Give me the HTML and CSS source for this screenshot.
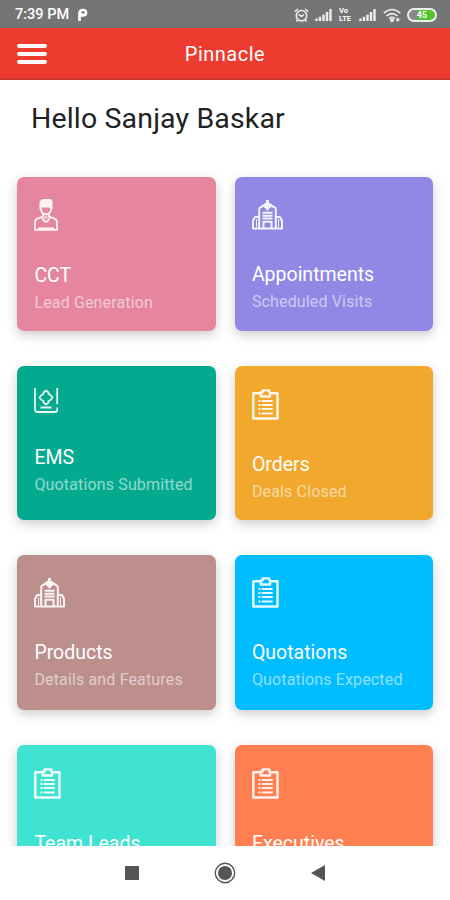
FILE: index.html
```html
<!DOCTYPE html>
<html lang="en">
<head>
    <meta charset="UTF-8">
    <meta name="viewport" content="width=device-width, initial-scale=1.0">
    <title>Pinnacle</title>
    <link rel="stylesheet" href="styles.css">
</head>
<body>
    <!-- Shared icons -->
    <svg class="sprite">
        <symbol id="clipboard" viewBox="0 0 27 31">
            <path d="M8 4.200H1.300v25.300h24.200V4.200H18" fill="none" stroke="currentColor" stroke-width="2.400" stroke-linejoin="round"/>
            <path d="M8.700 7.500V3.500h2V1.300h6.600v2.200h.8v4z" fill="none" stroke="currentColor" stroke-width="2.300" stroke-linejoin="round"/>
            <path d="M6.500 12h2m1.200 0h11M6.500 16h2m1.200 0h11M6.500 20h2m1.200 0h11M6.500 24.500h2m1.200 0h11" fill="none" stroke="currentColor" stroke-width="2.200"/>
        </symbol>
        <symbol id="building" viewBox="0 0 31 30">
            <g fill="none" stroke="currentColor" stroke-width="2" stroke-linejoin="round">
                <path d="M7.200 28V9.500q0-1.500 1.500-2.300L14 4.500m3 0l5.300 2.700q1.500.8 1.500 2.300V28"/>
                <path d="M6.800 17H4q-1.500 0-1.900 1.500L1 21v7.500h29V21l-1.100-2.500Q28.500 17 27 17h-2.800"/>
                <path d="M4.500 19v8M26.500 19v8" stroke-width="1"/>
                <path d="M11.500 28v-6.300h8V28M10.500 12.800h10M10.500 15.700h10M10.500 18.500h10"/>
            </g>
            <path d="M14 0h3v2.500l4.500 3L18 8l-2.500 3L13 8 9.500 5.500l4.500-3z" fill="currentColor"/>
        </symbol>
    </svg>

    <div class="status-bar">
        <div class="status-left">
            <span>7:39 PM</span>
            <svg width="11" height="14" viewBox="0 0 11 14">
                <path d="M2.500 13V5.500Q2.500 2 6 2q3 0 3 2.700T6 7.500H4.800V5" fill="none" stroke="#fff" stroke-width="2.700"/>
            </svg>
        </div>
        <div class="status-right">
            <svg class="alarm" width="15" height="14" viewBox="0 0 15 14">
                <circle cx="7.500" cy="7.700" r="5.200"/>
                <path d="M.8 3.600L4 1M14.200 3.600L11 1M4.700 6.500l2.800 2 2.500-2M3.500 12l-1 1.500M11.500 12l1 1.500"/>
            </svg>
            <svg class="signal" width="18" height="12" viewBox="0 0 18 12">
                <path d="M1.500 12V9.500M5 12V7.800M8.500 12V5.500M12 12V3M15.500 12V0"/>
            </svg>
            <div class="volte"><span>Vo</span><span>LTE</span></div>
            <svg class="signal" width="18" height="12" viewBox="0 0 18 12">
                <path d="M1.500 12V9.500M5 12V7.800M8.500 12V5.500M12 12V3M15.500 12V0"/>
            </svg>
            <svg class="wifi" width="18" height="14" viewBox="0 0 18 14">
                <path d="M.8 5.200q8.200-7.400 16.400 0M3.500 8q5.500-4.900 11 0M6.200 10.500q2.800-2.200 5.600 0"/>
                <path d="M8 11.500h2v1.500H8zM14 11h1.500v1.500H14z"/>
            </svg>
            <div class="battery"><span>45</span></div>
        </div>
    </div>

    <header class="header">
        <div class="menu">
            <span></span>
            <span></span>
            <span></span>
        </div>
        <h1>Pinnacle</h1>
    </header>

    <main class="content">
        <h2>Hello Sanjay Baskar</h2>
        <div class="cards">
            <div class="card pink">
                <svg width="24" height="32" viewBox="0 0 24 32">
                    <path d="M5.500 10V4Q5.500 0 11 0h5q2.500 0 2.500 3v7H17l-2-1.500H8L6.500 10z" fill="currentColor"/>
                    <g fill="none" stroke="currentColor" stroke-width="1.800" stroke-linejoin="round">
                        <path d="M6.500 8q0 6.500 5.500 7.500 5.500-1 5.500-7.500M9 15v3M15 15v3"/>
                        <path d="M9 17.500l-5.500 2.200Q1 20.700 1 23.500v7.300h22v-7.300q0-2.800-2.500-3.800L15 17.500"/>
                        <path d="M8 18.500l2.500 4h3l2.500-4M10.500 18.500h3M4 29.500h16"/>
                    </g>
                </svg>
                <h3>CCT</h3>
                <p>Lead Generation</p>
            </div>
            <div class="card purple">
                <svg class="low" width="31" height="30"><use href="#building"/></svg>
                <h3>Appointments</h3>
                <p>Scheduled Visits</p>
            </div>
            <div class="card green">
                <svg width="25" height="25" viewBox="0 0 25 25">
                    <g fill="none" stroke="currentColor" stroke-width="1.800" stroke-linejoin="round">
                        <path d="M1 0v21.500Q1 24 3.500 24H21q2.200 0 2.200-2v-2.500M23.200 0v16"/>
                        <path d="M9.500 6V4.500L12 2.500l2.500 2V6l2 1 2 2.500-2 2.500-2 1v1.500L12 16.500l-2.500-2V13l-2-1-2-2.500 2-2.500zM6.500 19.500h11"/>
                    </g>
                </svg>
                <h3>EMS</h3>
                <p>Quotations Submitted</p>
            </div>
            <div class="card orange">
                <svg class="low" width="27" height="31"><use href="#clipboard"/></svg>
                <h3>Orders</h3>
                <p>Deals Closed</p>
            </div>
            <div class="card brown">
                <svg class="low" width="31" height="30"><use href="#building"/></svg>
                <h3>Products</h3>
                <p>Details and Features</p>
            </div>
            <div class="card blue">
                <svg width="27" height="31"><use href="#clipboard"/></svg>
                <h3>Quotations</h3>
                <p>Quotations Expected</p>
            </div>
            <div class="card teal">
                <svg class="low" width="27" height="31"><use href="#clipboard"/></svg>
                <h3>Team Leads</h3>
            </div>
            <div class="card coral">
                <svg class="low" width="27" height="31"><use href="#clipboard"/></svg>
                <h3>Executives</h3>
            </div>
        </div>
    </main>

    <nav class="nav-bar">
        <svg width="14" height="14" viewBox="0 0 14 14"><rect width="14" height="14"/></svg>
        <svg width="22" height="22" viewBox="0 0 22 22">
            <circle cx="11" cy="11" r="9.700" fill="none" stroke="#555" stroke-width="1.400"/>
            <circle cx="11" cy="11" r="7"/>
        </svg>
        <svg width="14" height="16" viewBox="0 0 14 16"><path d="M0 8L14 0v16z"/></svg>
    </nav>
</body>
</html>
```

FILE: styles.css
```css
* {
    box-sizing: border-box;
}
body {
    font-family: Roboto, sans-serif;
    margin: 0;
    height: 900px;
    display: flex;
    flex-direction: column;
    overflow: hidden;
    background-color: #fff;
}
h1, h2, h3, p {
    margin: 0;
    font-weight: 400;
    white-space: nowrap;
}
.sprite {
    display: none;
}

/* Status bar */
.status-bar {
    height: 28px;
    flex: none;
    padding: 1px 13px 0 15px;
    display: flex;
    align-items: center;
    justify-content: space-between;
    background-color: #757575;
    color: #fff;
}
.status-left {
    display: flex;
    align-items: center;
    gap: 8px;
    font-size: 14.5px;
    font-weight: 500;
}
.status-right {
    display: flex;
    align-items: center;
    gap: 6px;
}
.status-right svg {
    fill: none;
    stroke: #eee;
    stroke-width: 1.6;
}
.status-right .signal {
    stroke-width: 2.4;
}
.volte {
    display: flex;
    flex-direction: column;
    width: 14px;
    font-size: 7.5px;
    font-weight: 700;
    line-height: 7.5px;
}
.battery {
    width: 30px;
    height: 14px;
    border: 2px solid #eee;
    border-radius: 7px;
    background: linear-gradient(to right, #858a82 35%, #4fc52c 35%);
    font-size: 9px;
    font-weight: 700;
    line-height: 10px;
    text-align: center;
}

/* Header */
.header {
    height: 52px;
    flex: none;
    padding: 2px 17px 0;
    display: grid;
    grid-template-columns: 30px 1fr 30px;
    align-items: center;
    background-color: #ee3b2f;
    border-bottom: 2px solid #c9382d;
    color: #fff;
}
.header h1 {
    font-size: 20px;
    letter-spacing: 0.5px;
    text-align: center;
}
.menu {
    display: flex;
    flex-direction: column;
    gap: 4px;
}
.menu span {
    height: 4px;
    border-radius: 2px;
    background-color: #fff;
}

/* Content */
.content {
    flex: 1;
    min-height: 0;
    overflow: hidden;
}
.content h2 {
    padding: 21px 0 0 31px;
    height: 97px;
    font-size: 28.5px;
    line-height: 36px;
    letter-spacing: 0.15px;
    color: #222;
}
.cards {
    display: grid;
    grid-template-columns: 199px 198px;
    grid-auto-rows: 154.2px;
    gap: 35px 18.5px;
    padding-left: 17px;
}
.card {
    padding: 22px 17.4px;
    border-radius: 7px;
    box-shadow: 0 4px 12px rgba(0, 0, 0, 0.2);
    color: #fff;
}
.card svg {
    display: block;
    margin-bottom: 33px;
    opacity: 0.9;
}
.card .low {
    margin-top: 1px;
}
.card h3 {
    font-size: 19.5px;
    line-height: 24px;
}
.card p {
    margin-top: 5px;
    font-size: 16px;
    line-height: 20px;
    letter-spacing: 0.15px;
    opacity: 0.55;
}
.pink { background-color: #e5869e; }
.purple { background-color: #9088e4; }
.green { background-color: #04aa90; }
.orange { background-color: #f1a82c; }
.brown { background-color: #bc8f8d; }
.blue { background-color: #00bdff; }
.teal { background-color: #40e3d1; }
.coral { background-color: #ff7f50; }

/* Navigation bar */
.nav-bar {
    height: 54px;
    flex: none;
    display: flex;
    align-items: center;
    justify-content: center;
    gap: 75px;
    background-color: #fff;
}
.nav-bar svg {
    fill: #555;
}
```
